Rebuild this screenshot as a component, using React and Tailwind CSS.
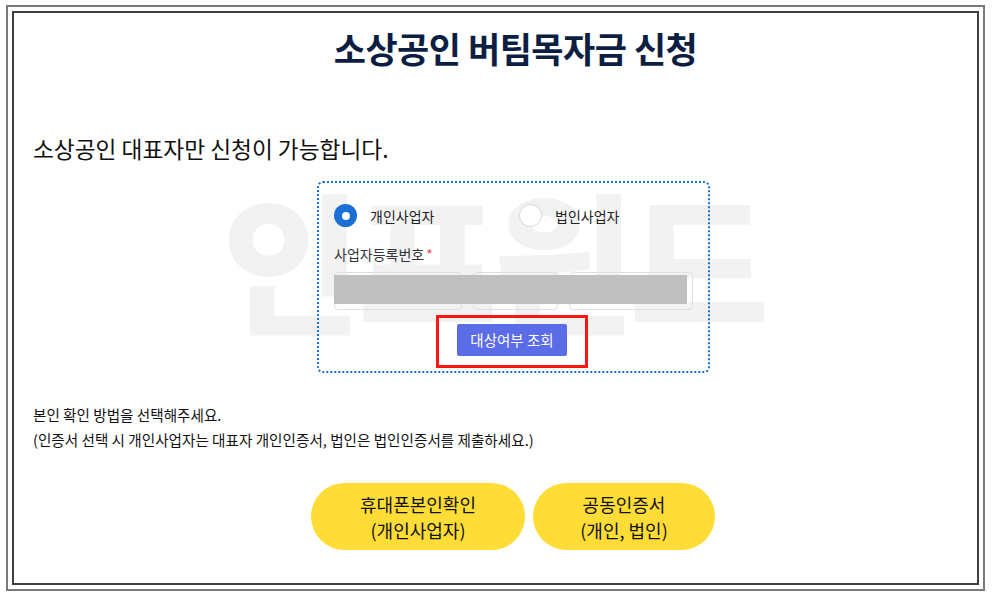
import React from 'react';

const font = { fontFamily: '"Noto Sans CJK KR", "Noto Sans", sans-serif' };

const Radio = ({ checked, label }) => (
  <label className="flex items-center gap-[13px]">
    {checked ? (
      <span className="flex h-[23px] w-[23px] items-center justify-center rounded-full bg-[#1b6fd5]">
        <span className="h-[8px] w-[8px] rounded-full bg-white" />
      </span>
    ) : (
      <span className="h-[23px] w-[23px] rounded-full border border-[#d6d6d6] bg-white" />
    )}
    <span className="text-[14px] leading-[20px] text-[#222]">{label}</span>
  </label>
);

const App = () => {
  return (
    <div className="h-[595px] w-[992px] bg-white pt-[5px] pl-[6px]" style={font}>
      <div className="h-[586px] w-[979px] border-2 border-[#7a7a7a] p-[4px]">
        <div className="relative h-full w-full overflow-hidden border-2 border-[#3f3f3f]">
          {/* watermark */}
          <div className="pointer-events-none absolute left-[208px] top-[168px] select-none text-[152px] font-black leading-none tracking-[-4px] text-[#f2f2f2]">
            인프원드
          </div>

          <div className="relative flex flex-col">
            <h1 className="mt-[12px] pl-[40px] text-center text-[35px] font-bold leading-[46px] tracking-[-0.5px] text-[#0c1f43]">
              소상공인 버팀목자금 신청
            </h1>

            <p className="mt-[63px] pl-[19px] text-[22.7px] leading-[30px] text-[#111]">
              소상공인 대표자만 신청이 가능합니다.
            </p>

            <div className="mt-[17px] ml-[303px] h-[192px] w-[393px] rounded-[6px] border-2 border-dotted border-[#1b6fd5] px-[15px] pt-[21px]">
              <div className="flex">
                <div className="w-[185px]">
                  <Radio checked label="개인사업자" />
                </div>
                <Radio label="법인사업자" />
              </div>

              <div className="mt-[17px] text-[14px] leading-[20px] text-[#333]">
                사업자등록번호<span className="ml-[2px] text-[#f04b4b]">*</span>
              </div>

              <div className="relative mt-[8px] flex h-[38px] gap-[11px]">
                <div className="w-[128px] rounded-[4px] border border-[#e0e0e0]" />
                <div className="w-[86px] rounded-[4px] border border-[#e0e0e0]" />
                <div className="w-[124px] rounded-[4px] border border-[#e0e0e0]" />
                <div className="absolute left-0 top-[3px] h-[29px] w-[353px] bg-[#bdbdbd]/95" />
              </div>

              <div className="mt-[5px] flex justify-center">
                <div className="ml-[-3px] flex h-[53px] w-[152px] items-start justify-center border-[3px] border-[#ff1414] pt-[6px]">
                  <button className="h-[32px] w-[110px] rounded-[2px] bg-[#5b6ce9] text-[14.5px] text-white">
                    대상여부 조회
                  </button>
                </div>
              </div>
            </div>

            <div className="mt-[29px] pl-[19px] text-[14.6px] leading-[25px] text-[#111]">
              <p>본인 확인 방법을 선택해주세요.</p>
              <p>(인증서 선택 시 개인사업자는 대표자 개인인증서, 법인은 법인인증서를 제출하세요.)</p>
            </div>

            <div className="mt-[31px] flex justify-center gap-[8px] pl-[35px]">
              <button className="flex h-[67px] w-[214px] flex-col items-center justify-center rounded-full bg-[#ffdc36] text-[18px] leading-[26px] text-[#111]">
                <span>휴대폰본인확인</span>
                <span>(개인사업자)</span>
              </button>
              <button className="flex h-[67px] w-[182px] flex-col items-center justify-center rounded-full bg-[#ffdc36] text-[18px] leading-[26px] text-[#111]">
                <span>공동인증서</span>
                <span>(개인, 법인)</span>
              </button>
            </div>
          </div>
        </div>
      </div>
    </div>
  );
};

export default App;
